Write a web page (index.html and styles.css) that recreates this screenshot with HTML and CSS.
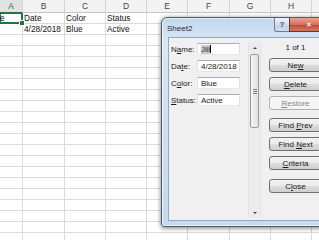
FILE: index.html
```html
<!DOCTYPE html>
<html lang="en">
<head>
    <meta charset="UTF-8">
    <title>Sheet2 - Data Form</title>
    <link rel="stylesheet" href="styles.css">
</head>
<body>
    <div class="sheet">
        <div class="hd hd-sel">A</div>
        <div class="hd">B</div>
        <div class="hd">C</div>
        <div class="hd">D</div>
        <div class="hd">E</div>
        <div class="hd">F</div>
        <div class="hd">G</div>
        <div class="hd">H</div>
        <div class="hd"></div>

        <div class="cell sel">e</div>
        <div class="cell">Date</div>
        <div class="cell">Color</div>
        <div class="cell">Status</div>
        <div class="cell"></div>
        <div class="cell"></div>
        <div class="cell"></div>
        <div class="cell"></div>
        <div class="cell"></div>

        <div class="cell"></div>
        <div class="cell">4/28/2018</div>
        <div class="cell">Blue</div>
        <div class="cell">Active</div>
        <div class="cell"></div>
        <div class="cell"></div>
        <div class="cell"></div>
        <div class="cell"></div>
        <div class="cell"></div>

        <div class="fill"></div>
        <div class="fill"></div>
        <div class="fill"></div>
        <div class="fill"></div>
        <div class="fill"></div>
        <div class="fill"></div>
        <div class="fill"></div>
        <div class="fill"></div>
        <div class="fill"></div>
    </div>

    <div class="dialog">
        <div class="titlebar">
            <span class="title">Sheet2</span>
            <span class="cap-btn help">?</span>
            <span class="cap-btn close">&#x2715;</span>
        </div>
        <div class="body">
            <div class="fields">
                <div class="field"><label>N<u>a</u>me:</label><div class="input"><span class="selected">Jill</span><span class="caret"></span></div></div>
                <div class="field"><label>Da<u>t</u>e:</label><div class="input">4/28/2018</div></div>
                <div class="field"><label>C<u>o</u>lor:</label><div class="input">Blue</div></div>
                <div class="field"><label><u>S</u>tatus:</label><div class="input">Active</div></div>
            </div>
            <div class="scrollbar">
                <span class="arrow up"></span>
                <span class="thumb"><span class="grip"></span></span>
                <span class="arrow down"></span>
            </div>
            <div class="actions">
                <div class="count">1 of 1</div>
                <button>Ne<u>w</u></button>
                <button><u>D</u>elete</button>
                <button disabled><u>R</u>estore</button>
                <button class="group">Find <u>P</u>rev</button>
                <button>Find <u>N</u>ext</button>
                <button><u>C</u>riteria</button>
                <button class="group last">C<u>l</u>ose</button>
            </div>
        </div>
    </div>
</body>
</html>
```

FILE: styles.css
```css
body {
    margin: 0;
    width: 319px;
    height: 240px;
    overflow: hidden;
    position: relative;
    background: #fff;
    font-family: "Liberation Sans", Arial, sans-serif;
}

/* worksheet */
.sheet {
    display: grid;
    grid-template-columns: 23px 42px 41px 41px 41px 42px 41px 41px 41px;
    grid-template-rows: 13px 11px 11px 1fr;
    height: 240px;
}
.hd {
    background: #f3f3f3;
    border-right: 1px solid #d4d4d4;
    border-bottom: 1px solid #c6c6c6;
    font-size: 8.5px;
    line-height: 12px;
    color: #444;
    text-align: center;
}
.hd-sel {
    background: #e1e1e1;
    color: #217346;
    border-bottom: 1px solid #217346;
}
.cell {
    border-right: 1px solid #dadada;
    border-bottom: 1px solid #dadada;
    font-size: 8.3px;
    line-height: 10px;
    padding-left: 1px;
    color: #111;
    white-space: nowrap;
    overflow: hidden;
}
.cell.sel {
    position: relative;
    overflow: visible;
    padding-left: 0;
    box-shadow: inset 0 0 0 1px #217346;
    border-right: 1px solid #217346;
    border-bottom: 1px solid #217346;
}
.cell.sel::after {
    content: "";
    position: absolute;
    right: -3px;
    bottom: -3px;
    width: 4px;
    height: 4px;
    background: #217346;
    border: 1px solid #fff;
}
.fill {
    border-right: 1px solid #dadada;
    background: repeating-linear-gradient(to bottom, transparent 0 10px, #dadada 10px 11px);
}

/* data form dialog */
.dialog {
    position: absolute;
    left: 161px;
    top: 17px;
    width: 161px;
    padding: 0 6px 5px;
    border: 1px solid #4c5b6d;
    border-radius: 6px 6px 3px 3px;
    background: linear-gradient(#c3d7ed, #d8e6f5 22px, #c6d9ee);
    box-shadow: 0 1px 5px rgba(0, 0, 0, 0.55), inset 0 0 0 1px rgba(255, 255, 255, 0.6);
}
.titlebar {
    display: flex;
    align-items: flex-start;
    height: 19px;
}
.title {
    margin-left: -1px;
    font-size: 8px;
    line-height: 22px;
    color: #1e2b3b;
}
.cap-btn {
    height: 13px;
    font-weight: bold;
    text-align: center;
    line-height: 13px;
    border: 1px solid #6c7d92;
    border-top: none;
}
.help {
    margin-left: auto;
    width: 14px;
    font-size: 8px;
    color: #3c4a5c;
    border-radius: 0 0 0 3px;
    border-right: none;
    background: linear-gradient(#eef3fa, #d3dfee 50%, #bfd0e6 51%, #cfdcec);
}
.close {
    width: 38px;
    font-size: 7px;
    color: #fff;
    text-shadow: 0 0 1px #5a1a10;
    border-color: #6e3128;
    background: linear-gradient(#e7a593, #d1705c 50%, #c14530 51%, #d07a62);
}
.body {
    display: flex;
    height: 184px;
    box-sizing: border-box;
    border: 1px solid #93a9c2;
    background: #f0f0f0;
    font-size: 8px;
    color: #1a1a1a;
}
.fields {
    display: flex;
    flex-direction: column;
    gap: 5px;
    padding: 5px 0 0 2px;
}
.field {
    display: flex;
    align-items: center;
    height: 12px;
}
.field label {
    width: 26px;
}
.input {
    display: flex;
    align-items: center;
    width: 43px;
    height: 12px;
    box-sizing: border-box;
    padding-left: 3px;
    border: 1px solid #abadb3;
    border-left-color: #e2e3ea;
    border-right-color: #dbdfe6;
    border-bottom-color: #e3e9ef;
    background: #fff;
}
.selected {
    background: #c9c9c3;
    color: #3a3a30;
}
.caret {
    width: 1px;
    height: 8px;
    background: #000;
}
.scrollbar {
    display: flex;
    flex-direction: column;
    align-items: center;
    width: 11px;
    margin: 4px 0 2px 8px;
    background: #ececec;
    border-left: 1px solid #e3e3e3;
    border-right: 1px solid #e3e3e3;
}
.arrow {
    width: 0;
    height: 0;
    border-left: 2px solid transparent;
    border-right: 2px solid transparent;
}
.arrow.up {
    margin: 5px 0 5px;
    border-bottom: 2px solid #444;
}
.arrow.down {
    margin: auto 0 4px;
    border-top: 2px solid #444;
}
.thumb {
    display: flex;
    align-items: center;
    justify-content: center;
    width: 9px;
    height: 74px;
    box-sizing: border-box;
    border: 1px solid #9a9a9a;
    border-radius: 2px;
    background: linear-gradient(to right, #f4f4f4, #e2e2e2);
}
.grip {
    width: 4px;
    height: 5px;
    background: repeating-linear-gradient(to bottom, #777 0 1px, transparent 1px 2px);
}
.actions {
    display: flex;
    flex-direction: column;
    width: 53px;
    margin-left: 8px;
    padding-top: 5px;
}
.count {
    height: 10px;
    line-height: 10px;
    margin-bottom: 5px;
    text-align: center;
}
button {
    height: 14px;
    margin-bottom: 5px;
    padding: 0;
    font-family: inherit;
    font-size: 8px;
    color: #1a1a1a;
    border: 1px solid #707070;
    border-radius: 3px;
    background: linear-gradient(#f2f2f2, #ebebeb 50%, #dddddd 51%, #cfcfcf);
}
button:disabled {
    color: #8a8a8a;
    border-color: #adb2b5;
    background: #f4f4f4;
}
button.group {
    margin-top: 3px;
}
button.last {
    margin-top: 4px;
}
```
